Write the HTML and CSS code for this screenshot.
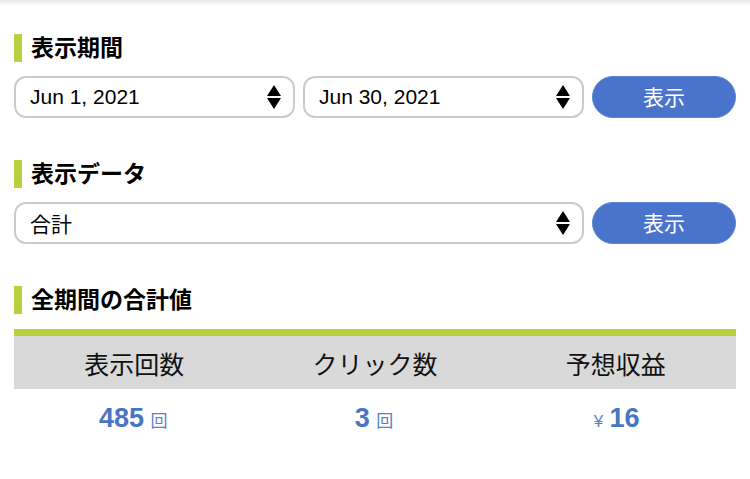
FILE: index.html
```html
<!DOCTYPE html>
<html lang="ja">
<head>
    <meta charset="UTF-8">
    <meta name="viewport" content="width=device-width, initial-scale=1.0">
    <title>レポート</title>
    <link rel="stylesheet" href="styles.css">
</head>
<body>
    <div class="top-shade"></div>

    <div class="page">
        <h2 class="heading">表示期間</h2>
        <div class="controls">
            <div class="select">
                <span>Jun 1, 2021</span>
                <svg class="arrows" width="14" height="24" viewBox="0 0 14 24"><path d="M7 0 L14 11 L0 11 Z M0 13 L14 13 L7 24 Z" fill="#000"/></svg>
            </div>
            <div class="select">
                <span>Jun 30, 2021</span>
                <svg class="arrows" width="14" height="24" viewBox="0 0 14 24"><path d="M7 0 L14 11 L0 11 Z M0 13 L14 13 L7 24 Z" fill="#000"/></svg>
            </div>
            <button class="btn" type="button">表示</button>
        </div>

        <h2 class="heading">表示データ</h2>
        <div class="controls">
            <div class="select wide">
                <span>合計</span>
                <svg class="arrows" width="14" height="24" viewBox="0 0 14 24"><path d="M7 0 L14 11 L0 11 Z M0 13 L14 13 L7 24 Z" fill="#000"/></svg>
            </div>
            <button class="btn" type="button">表示</button>
        </div>

        <h2 class="heading">全期間の合計値</h2>
        <table class="totals">
            <thead>
                <tr>
                    <th>表示回数</th>
                    <th>クリック数</th>
                    <th>予想収益</th>
                </tr>
            </thead>
            <tbody>
                <tr>
                    <td><span class="num">485</span> <span class="unit">回</span></td>
                    <td><span class="num">3</span> <span class="unit">回</span></td>
                    <td><span class="unit">¥</span> <span class="num">16</span></td>
                </tr>
            </tbody>
        </table>
    </div>
</body>
</html>
```

FILE: styles.css
```css
body {
    margin: 0;
    background: #fff;
    color: #000;
    font-family: "Liberation Sans", "Noto Sans CJK JP", sans-serif;
}
.top-shade {
    height: 6px;
    background: linear-gradient(#e9e9e9, #fff);
}
.page {
    padding: 28px 14px 0;
}
.heading {
    margin: 0 0 14px;
    border-left: 8px solid #b9cf3e;
    padding-left: 9px;
    height: 28px;
    line-height: 28px;
    font-size: 23px;
    font-weight: bold;
}
.controls {
    display: flex;
    gap: 8px;
    margin-bottom: 42px;
}
.select {
    width: 281px;
    height: 42px;
    flex-shrink: 0;
    box-sizing: border-box;
    border: 2px solid #cbcbcb;
    border-radius: 12px;
    display: flex;
    align-items: center;
    justify-content: space-between;
    padding: 0 12px 0 14px;
    font-size: 21px;
}
.select.wide {
    width: 570px;
}
.arrows {
    display: block;
}
.btn {
    width: 144px;
    height: 42px;
    flex-shrink: 0;
    border: 1px solid #5f85d2;
    border-radius: 21px;
    background: #4a74cb;
    color: #fff;
    font-family: inherit;
    font-size: 21px;
    padding: 0 0 3px;
}
.totals {
    width: 100%;
    margin-top: 15px;
    border-collapse: collapse;
    table-layout: fixed;
}
.totals th {
    border-top: 7px solid #b9cf3e;
    background: #d9d9d9;
    height: 53px;
    padding: 0;
    font-size: 25px;
    font-weight: normal;
    color: #111;
}
.totals td {
    height: 58px;
    padding: 0;
    text-align: center;
    color: #4a74c4;
}
.num {
    font-size: 27px;
    font-weight: bold;
}
.unit {
    font-size: 17px;
    margin: 0 2px;
    color: #5b7fc6;
}
```
